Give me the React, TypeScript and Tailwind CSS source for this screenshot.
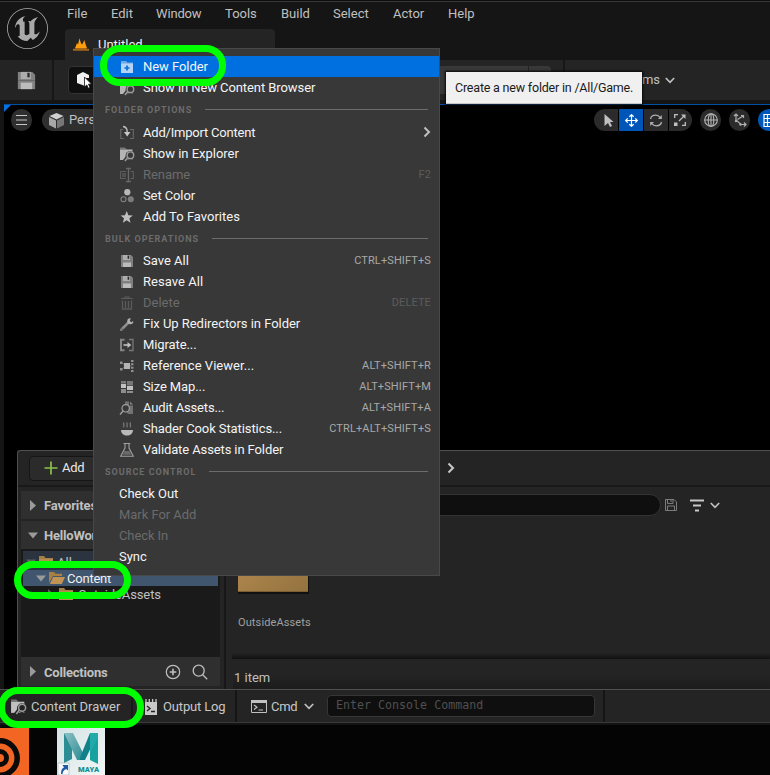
import React from "react";
import { SiUnrealengine } from "react-icons/si";

const font = "font-['Roboto','Noto_Sans',sans-serif]";

type IconProps = { className?: string; children: React.ReactNode; size?: number };
const Svg = ({ className = "", children, size = 16 }: IconProps) => (
  <svg width={size} height={size} viewBox="0 0 16 16" fill="none" className={"shrink-0 " + className}>
    {children}
  </svg>
);

const Floppy = ({ size = 16, className = "" }: { size?: number; className?: string }) => (
  <Svg size={size} className={className}>
    <path d="M2 2h10l2 2v4H2z" fill="#808080" />
    <path d="M2 8h12v6H2z" fill="#808080" />
    <path d="M4 2h7v5H4z" fill="#adadad" />
    <path d="M8.6 2.6h1.6v3.2H8.6z" fill="#2a2a2a" />
    <path d="M4 9.5h8V14H4z" fill="#bcbcbc" />
  </Svg>
);

const FolderSearch = ({ size = 16, color = "#b4b4b4", bg = "#383838" }: { size?: number; color?: string; bg?: string }) => (
  <Svg size={size}>
    <path d="M1 1.5h5l2 2H1z" fill={color} opacity=".5" />
    <path d="M1 3.500h12.500V14H1z" fill={color} />
    <circle cx="11.2" cy="9.5" r="4.600" fill={bg} />
    <path d="M9.4 9.8 5 15.6" stroke={bg} strokeWidth="3.400" />
    <circle cx="11.400" cy="9.2" r="3.3" stroke="#9c9c9c" strokeWidth="1.4" />
    <path d="M8.8 11.4 6 15" stroke="#9c9c9c" strokeWidth="1.5" />
  </Svg>
);

const icons: Record<string, React.ReactNode> = {
  newFolder: (
    <Svg>
      <path d="M2 2h5l1.5 1.5H14V5H2z" fill="#6fa9e8" />
      <path d="M2 4.5h12V14H2z" fill="#b4d3f5" />
      <path d="M8 6.5v5M5.5 9h5" stroke="#0670de" strokeWidth="1.7" />
    </Svg>
  ),
  folderSearch: <FolderSearch />,
  import: (
    <Svg>
      <path d="M4 4.500H1.700V13.500H5M11 13.500h3.300V4.500H11" stroke="#686868" strokeWidth="1.1" />
      <path d="M4 1.500C7 1.800 8.200 3.500 8.200 7" stroke="#c0c0c0" strokeWidth="1.4" />
      <path d="M5 7h6.400L8.200 11.400z" fill="#c8c8c8" />
    </Svg>
  ),
  rename: (
    <Svg>
      <path d="M1.500 4.500H7M1.500 4.500v7H7M11.500 4.500h2.800v7h-2.800" stroke="#5d5d5d" strokeWidth="1.1" />
      <path d="M3 6h4v4H3z" fill="#505050" />
      <path d="M7 1.500h5M9.500 1.500v13M7 14.500h5" stroke="#686868" strokeWidth="1.3" />
    </Svg>
  ),
  color: (
    <Svg>
      <circle cx="8.300" cy="4.200" r="3.100" fill="#b8b8b8" />
      <circle cx="4.500" cy="11.200" r="2.500" stroke="#858585" strokeWidth="1.100" />
      <circle cx="11.800" cy="11.200" r="3" fill="#7c7c7c" />
    </Svg>
  ),
  star: (
    <Svg>
      <path d="m7.700 2 1.700 4.200 4.400.3-3.400 2.800 1.100 4.400-3.800-2.400-3.800 2.400L5 9.300 1.600 6.500 6 6.200z" fill="#c0c0c0" />
    </Svg>
  ),
  save: <Floppy />,
  trash: (
    <Svg>
      <path d="M2 3.500h12M6 3.500V2h4v1.500" stroke="#5a5a5a" strokeWidth="1.200" />
      <path d="M3.500 5.500v8.500h9V5.500M6.500 6v7M9.500 6v7" stroke="#5a5a5a" strokeWidth="1.300" />
    </Svg>
  ),
  wrench: (
    <Svg>
      <path d="M2.400 13.700 9 7" stroke="#8f8f8f" strokeWidth="2.600" strokeLinecap="round" />
      <path d="M11.800 2.300a3 3 0 1 0 2.400 2.600l-2 1.300-1.400-1.500z" fill="#b0b0b0" />
      <circle cx="3" cy="13.100" r=".7" fill="#383838" />
    </Svg>
  ),
  migrate: (
    <Svg>
      <path d="M5.500 2.700H2v10.600h3.500" stroke="#858585" strokeWidth="2" />
      <path d="M10 2.500h4v11h-4" stroke="#777" strokeWidth="1.300" />
      <path d="M4.500 8h5" stroke="#c0c0c0" strokeWidth="1.600" />
      <path d="m8.500 5 3.800 3-3.800 3z" fill="#c0c0c0" />
    </Svg>
  ),
  reference: (
    <Svg>
      <path d="M5 5h6v6H5z" fill="#b4b4b4" />
      <path d="M1 3.500h2.500V6H1zM1 10h2.500v2.500H1zM12 2h2.500v2H12zM12 5.300h2.500v2H12zM12 8.700h2.500v2H12zM12 12h2.500v2H12z" fill="#8e8e8e" />
      <path d="M3 5l2 1.500M3 11l2-1.500M11 8h1.500" stroke="#777" />
    </Svg>
  ),
  size: (
    <Svg>
      <path d="M2 2h5v2H2zM8 2h6v4H8z" fill="#777" />
      <path d="M2 4.800h5V9H2zM8 6.800h6V11H8z" fill="#c0c0c0" />
      <path d="M2 10h5v4H2zM8 12h6v2H8z" fill="#8d8d8d" />
    </Svg>
  ),
  audit: (
    <Svg>
      <path d="M6 1.500h4v4h4V14H9l-3-4z" fill="#727272" />
      <path d="M11 1.500 14 4.500h-3z" fill="#858585" />
      <circle cx="6.700" cy="8.300" r="3.700" fill="#383838" stroke="#a0a0a0" strokeWidth="1.200" />
      <path d="m4 11-3 3.600" stroke="#a0a0a0" strokeWidth="1.400" />
    </Svg>
  ),
  cook: (
    <Svg>
      <path d="M5 1.500c-1.500 1.500 1 3-.5 5M8.300 1.500c-1.500 1.500 1 3-.5 5M11.600 1.500c-1.500 1.500 1 3-.5 5" stroke="#7c7c7c" strokeWidth="1.200" />
      <path d="M2 9h12c0 3.500-2.700 5.500-6 5.500s-6-2-6-5.500z" fill="#b8b8b8" />
    </Svg>
  ),
  flask: (
    <Svg>
      <path d="M4.500 1.500h6.800M6 1.500V6L1.700 14.300h12.600L10 6V1.500" stroke="#a0a0a0" strokeWidth="1.100" />
      <path d="M5.500 9h5l1.700 3.800H3.800z" fill="#6a6a6a" />
    </Svg>
  ),
};

type Row = { icon?: string; label: string; keys?: string; off?: boolean; arrow?: boolean; active?: boolean; ls?: string };

const MenuRow = ({ icon, label, keys, off, arrow, active, ls = "tracking-[0px]" }: Row) => (
  <div className={"flex h-[21px] items-center pl-[25px] pr-2 text-[13px] " + (active ? "bg-[#0070e0] " : "") + (off ? "text-[#6b6b6b]" : "text-[#f4f4f4]")}>
    {icon && <span className="mr-2 flex h-4 w-4">{icons[icon]}</span>}
    <span className={"whitespace-pre " + ls}>{label}</span>
    {keys && <span className={"ml-auto pt-[2px] text-[11px] tracking-[0.12px] " + (off ? "text-[#5c5c5c]" : "text-[#a8a8a8]")}>{keys}</span>}
    {arrow && (
      <svg width="9" height="12" viewBox="0 0 9 12" fill="none" className="-mt-px ml-auto">
        <path d="m2.500 1.500 4.500 4.500-4.500 4.500" stroke="#c0c0c0" strokeWidth="2" />
      </svg>
    )}
  </div>
);

const MenuHead = ({ text, h }: { text: string; h: string }) => (
  <div className={"flex items-center px-[11px] " + h}>
    <span className="pt-[2px] text-[9px] font-bold tracking-[1px] text-[#6c6c6c]">{text}</span>
    <span className="ml-[13px] h-px flex-1 bg-[#6c6c6c]" />
  </div>
);

const ContextMenu = () => (
  <div className="absolute left-[93px] top-[48px] h-[528px] w-[347px] border border-[#484848] bg-[#383838] pt-[7px]">
    <MenuRow icon="newFolder" label="New Folder" active ls="tracking-[-0.05px]" />
    <MenuRow icon="folderSearch" label="Show in New Content Browser" ls="tracking-[-0.08px]" />
    <MenuHead text="FOLDER OPTIONS" h="h-[23px] mb-px" />
    <MenuRow icon="import" label="Add/Import Content" arrow ls="tracking-[-0.21px]" />
    <MenuRow icon="folderSearch" label="Show in Explorer" ls="tracking-[-0.02px]" />
    <MenuRow icon="rename" label="Rename" keys="F2" off ls="tracking-[-0.05px]" />
    <MenuRow icon="color" label="Set Color" ls="tracking-[-0.1px]" />
    <MenuRow icon="star" label="Add To Favorites" />
    <MenuHead text="BULK OPERATIONS" h="h-[23px]" />
    <MenuRow icon="save" label="Save All" keys="CTRL+SHIFT+S" />
    <MenuRow icon="save" label="Resave All" ls="tracking-[0.04px]" />
    <MenuRow icon="trash" label="Delete" keys="DELETE" off />
    <MenuRow icon="wrench" label="Fix Up Redirectors in Folder" ls="tracking-[-0.03px]" />
    <MenuRow icon="migrate" label="Migrate..." ls="tracking-[-0.1px]" />
    <MenuRow icon="reference" label="Reference Viewer..." keys="ALT+SHIFT+R" ls="tracking-[0.04px]" />
    <MenuRow icon="size" label="Size Map..." keys="ALT+SHIFT+M" ls="tracking-[-0.1px]" />
    <MenuRow icon="audit" label="Audit Assets..." keys="ALT+SHIFT+A" ls="tracking-[-0.15px]" />
    <MenuRow icon="cook" label="Shader Cook Statistics..." keys="CTRL+ALT+SHIFT+S" ls="tracking-[-0.09px]" />
    <MenuRow icon="flask" label="Validate Assets in Folder" ls="tracking-[-0.11px]" />
    <MenuHead text="SOURCE CONTROL" h="h-[23px]" />
    <MenuRow label="Check Out" ls="tracking-[-0.02px]" />
    <MenuRow label="Mark For Add" off ls="tracking-[-0.05px]" />
    <MenuRow label="Check In" off ls="tracking-[-0.1px]" />
    <MenuRow label="Sync" />
  </div>
);

const Chevron = ({ className = "" }: { className?: string }) => (
  <svg width="10" height="7" viewBox="0 0 10 7" fill="none" className={className}>
    <path d="m.8 1 4.200 4.300L9.200 1" stroke="#c0c0c0" strokeWidth="1.700" />
  </svg>
);

const TitleBar = () => (
  <div className="flex h-[60px] border-t border-[#0c0c0c] bg-[#151515]">
    <div className="flex w-[65px] items-center justify-center border-t border-[#383838] pb-[5px] pr-[11px] text-[#a9a9a9]">
      <SiUnrealengine size={41} />
    </div>
    <div className="flex flex-1 flex-col justify-between border-t border-[#383838]">
      <div className="flex h-6 items-center pl-[2px] text-[13px] text-[#c0c0c0]">
        <span className="w-[44px]">File</span>
        <span className="w-[45px]">Edit</span>
        <span className="w-[69px] tracking-[-0.15px]">Window</span>
        <span className="w-[56px]">Tools</span>
        <span className="w-[52px]">Build</span>
        <span className="w-[60px]">Select</span>
        <span className="w-[55px]">Actor</span>
        <span>Help</span>
      </div>
      <div className="flex h-[31px] w-[210px] items-center rounded-t-[4px] bg-[#242424] pl-[8px] text-[13px] text-[#f0f0f0]">
        <svg width="16" height="13" viewBox="0 0 16 13" className="mr-[9px]">
          <path d="M2 10.200 4 5l1 1.500L6.500.3l1.300 4.500L9 6.500 10 5l1.300-3L12.500 6 14 10.200z" fill="#ff9d0a" />
          <path d="M0 10.700h2l.5-.7h11l.5.7h2v2H0z" fill="#a5661a" />
        </svg>
        <span>Untitled</span>
      </div>
    </div>
  </div>
);

const Toolbar = () => (
  <div className="flex h-[44px] border-b-4 border-[#151515] bg-[#242424]">
    <div className="flex w-[54px] items-center justify-center border-r-2 border-[#171717]">
      <Floppy size={23} />
    </div>
    <div className="ml-[14px] mt-[6px] flex h-7 w-[60px] items-center rounded-[4px] border border-[#333] bg-[#0f0f0f] pl-[7px]">
      <svg width="20" height="20" viewBox="0 0 20 20">
        <path d="m1 5 6-3 6 3v3L9 8v8l-8-3z" fill="#f0f0f0" />
        <path d="m8.500 7 7 7-3 .2 1.500 3.300-1.700.8-1.500-3.300-2.300 2z" fill="#fff" stroke="#111" strokeWidth=".8" />
      </svg>
    </div>
    <div className="ml-[272px] mt-[6px] flex h-7 gap-px">
      <div className="w-[128px] bg-[#383838]" />
      <div className="w-[22px] rounded-r-[4px] bg-[#383838]" />
    </div>
    <div className="ml-[12px] h-full w-[2px] bg-[#171717]" />
    <div className="flex w-[110px] items-center justify-end text-[13px] text-[#c0c0c0]">
      <span className="mr-[5px]">ms</span>
      <Chevron />
    </div>
  </div>
);

const cell = "flex h-[22px] items-center justify-center bg-[#2b2b2b]";

const Viewport = () => (
  <div className="flex h-[346px] bg-[#151515] pl-1">
    <div className="flex flex-1 items-start border-t border-[#0050a8] bg-black pt-1">
      <svg width="7" height="7" viewBox="0 0 7 7" className="-mt-1">
        <path d="M0 0h7L0 7z" fill="#0670de" />
      </svg>
      <div className="flex h-[22px] w-[21px] items-center justify-center rounded-full bg-[#2f2f2f]">
        <svg width="11" height="10" viewBox="0 0 11 10">
          <path d="M0 .5h11M0 5h11M0 9.500h11" stroke="#c8c8c8" />
        </svg>
      </div>
      <div className="ml-[10px] flex h-[22px] w-[110px] items-center rounded-full bg-[#2f2f2f] pl-[6px] text-[13px] text-[#c0c0c0]">
        <svg width="17" height="17" viewBox="0 0 17 17" className="mr-[4px]">
          <path d="m8.500 1 7 3-7 3.500-7-3.500z" fill="#d0d0d0" />
          <path d="M1 5l7 3.500v8L1 13z" fill="#a8a8a8" />
          <path d="m16 5-7 3.500v8l7-3.500z" fill="#777" />
        </svg>
        Perspective
      </div>
      <div className="ml-[442px] flex gap-px">
        <div className={cell + " w-[24px] rounded-l-full"}>
          <svg width="12" height="15" viewBox="0 0 12 15" className="ml-[5px]">
            <path d="m1.500 1 9 8H7l2 4-2 1-2-4-3.500 3z" fill="#c0c0c0" />
          </svg>
        </div>
        <div className="flex h-[22px] w-[24px] items-center justify-center bg-[#0056b8]">
          <svg width="13" height="13" viewBox="0 0 13 13" fill="none" stroke="#fff" strokeWidth="1.200">
            <path d="M6.500 1v11M1 6.500h11M4.300 2.800 6.500.7l2.200 2.100M4.300 10.200l2.200 2.100 2.200-2.100M2.800 4.300.7 6.500l2.100 2.200M10.200 4.300l2.100 2.200-2.100 2.200" />
          </svg>
        </div>
        <div className={cell + " w-[24px]"}>
          <svg width="14" height="13" viewBox="0 0 14 13" fill="none" stroke="#b0b0b0" strokeWidth="1.300">
            <path d="M1.500 5C2 2.600 4.300 1.200 6.700 1.200c2 0 3.500.8 4.500 2.300M12.500 8c-.5 2.400-2.800 3.800-5.200 3.800-2 0-3.500-.8-4.500-2.300" />
            <path d="M12.800 1v4H9zM1.200 12V8H5z" fill="#b0b0b0" stroke="none" />
          </svg>
        </div>
        <div className={cell + " w-[23px] rounded-r-full pr-[2px]"}>
          <svg width="12" height="12" viewBox="0 0 12 12" fill="none" stroke="#c0c0c0">
            <path d="M5 7 10 2" strokeWidth="1.300" />
            <path d="M7 .5h4.500V5z" fill="#c0c0c0" stroke="none" />
            <path d="M.7 4V.7H4M11.300 8v3.300H8" strokeWidth="1.300" />
            <path d="M0 8.500h3.500V12H0z" fill="#c0c0c0" stroke="none" />
          </svg>
        </div>
      </div>
      <div className={cell + " ml-[8px] w-[21px] rounded-full"}>
        <svg width="14" height="14" viewBox="0 0 14 14" fill="none" stroke="#b8b8b8" strokeWidth="1.100">
          <circle cx="7" cy="7" r="6.300" />
          <ellipse cx="7" cy="7" rx="2.800" ry="6.300" />
          <path d="M.7 7h12.600M7 .7v12.600" />
        </svg>
      </div>
      <div className={cell + " ml-[8px] w-[21px] rounded-full"}>
        <svg width="14" height="14" viewBox="0 0 14 14" fill="none" stroke="#b0b0b0" strokeWidth="1.200">
          <path d="M3 1.500v5.500L8 11.500h4.500M1 3l2-2 2 2M11 9.500l2 2-2 2" />
          <path d="M4.500 6.500 10 3M8 2.500h2.500V5" />
          <circle cx="3" cy="8" r="1.200" fill="#b0b0b0" stroke="none" />
          <circle cx="7.500" cy="11.500" r="1.200" fill="#b0b0b0" stroke="none" />
        </svg>
      </div>
      <div className="ml-[8px] flex h-[22px] w-[22px] shrink-0 items-center justify-center rounded-full bg-[#0056b8]">
        <svg width="13" height="13" viewBox="0 0 13 13" fill="none" stroke="#fff" className="shrink-0">
          <path d="M1 .5h11v12H1zM1 4.500h11M1 8.500h11M4.500.5v12M8.500.5v12" strokeWidth="1.200" />
        </svg>
      </div>
    </div>
  </div>
);

const Tri = ({ open, dim }: { open?: boolean; dim?: boolean }) => (
  <svg width="11" height="11" viewBox="0 0 11 11" className="shrink-0">
    <path d={open ? "M0 2.500h10L5 8.500z" : "M2 0v11l6-5.500z"} fill={dim ? "#5f5f5f" : "#9a9a9a"} />
  </svg>
);

const FolderGlyph = ({ open }: { open?: boolean }) => (
  <svg width="16" height="14" viewBox="0 0 16 14" className="shrink-0">
    {open ? (
      <>
        <path d="M0 1h5l1.500 1.800H13V5H4L0 12z" fill="#a8813f" />
        <path d="M4.200 6H16l-3.200 7H.8z" fill="#c09454" />
      </>
    ) : (
      <>
        <path d="M0 1h5l1.500 2H14v2H0z" fill="#a57f47" />
        <path d="M0 4h14v9H0z" fill="#b78c4f" />
      </>
    )}
  </svg>
);

const Drawer = () => (
  <div className="flex h-[239px] bg-[#151515] pl-1">
    <div className="w-[13px] bg-black" />
    <div className="flex flex-1 flex-col rounded-tl-[4px] border-l border-t border-[#505050] bg-[#242424]">
      <div className="flex h-[36px] items-center border-b-2 border-[#191919] pl-[11px]">
        <div className="flex h-[25px] w-[90px] items-center rounded-[4px] border border-[#161616] bg-[#2b2b2b] pl-[14px] text-[13px] tracking-[-0.3px] text-[#e8e8e8]">
          <svg width="14" height="14" viewBox="0 0 14 14" className="mr-[4px]">
            <path d="M7 .5v13M.5 7h13" stroke="#8bc24a" strokeWidth="1.700" />
          </svg>
          Add
        </div>
        <svg width="9" height="12" viewBox="0 0 9 12" fill="none" className="ml-[327px]">
          <path d="m2.500 1.500 4.500 4.500-4.500 4.500" stroke="#c8c8c8" strokeWidth="2" />
        </svg>
      </div>
      <div className="flex flex-1">
        <div className="flex w-[205px] flex-col px-[3px] pb-[3px] pt-[4px] text-[13px]">
          <div className="flex h-[28px] items-center bg-[#2f2f2f] pl-[7px] font-bold text-[#c0c0c0]">
            <Tri /><span className="ml-[5px] pt-px tracking-[-0.1px]">Favorites</span>
          </div>
          <div className="mt-[2px] flex h-[28px] items-center bg-[#2f2f2f] pl-[7px] font-bold text-[#c0c0c0]">
            <Tri open /><span className="ml-[5px] pt-[2px] tracking-[-0.2px]">HelloWorld</span>
          </div>
          <div className="flex-1 bg-[#1a1a1a] px-[2px] pt-[2px] text-[#c0c0c0]">
            <div className="flex h-[19px] items-end bg-[#2a333e] pl-[3px]">
              <div className="flex h-4 items-center"><Tri open dim /><span className="ml-[2px] mr-[2px] flex"><FolderGlyph /></span><span className="pt-[2px]">All</span></div>
            </div>
            <div className="flex h-4 items-center bg-[#40566f] pl-[13px] text-[#f0f0f0]">
              <Tri open /><span className="ml-[2px] mr-[2px] flex"><FolderGlyph open /></span><span className="pt-[2px] tracking-[-0.22px]">Content</span>
            </div>
            <div className="flex h-4 items-center pl-[23px]">
              <Tri dim /><span className="ml-[2px] mr-[3px] flex"><FolderGlyph /></span><span className="pt-[2px] tracking-[-0.1px]">OutsideAssets</span>
            </div>
          </div>
          <div className="flex h-[29px] items-center bg-[#2f2f2f] pl-[7px] font-bold text-[#c0c0c0]">
            <Tri /><span className="ml-[5px] pt-[2px] tracking-[-0.2px]">Collections</span>
            <svg width="16" height="16" viewBox="0 0 16 16" fill="none" stroke="#c0c0c0" strokeWidth="1.200" className="ml-auto mr-[11px]">
              <circle cx="8" cy="8" r="6.700" /><path d="M8 4.700v6.600M4.700 8h6.600" strokeWidth="1.600" />
            </svg>
            <svg width="16" height="16" viewBox="0 0 16 16" fill="none" stroke="#c0c0c0" strokeWidth="1.300" className="mr-[12px]">
              <circle cx="6.700" cy="6.700" r="5.500" /><path d="m10.700 10.700 4.500 4.500" />
            </svg>
          </div>
        </div>
        <div className="ml-px flex flex-1 flex-col border-l-2 border-[#171717] pl-[7px]">
          <div className="mt-[7px] flex h-[22px] items-center">
            <div className="h-[22px] w-[428px] rounded-full border border-[#333] bg-[#0f0f0f]" />
            <svg width="12" height="12" viewBox="0 0 12 12" fill="none" stroke="#7c7c7c" className="ml-[4px]">
              <path d="M.5.5H9L11.500 3v8.500H.5zM2.500.5v4H8v-4M2.500 11.500V7h7v4.500M6 1v2" />
            </svg>
            <svg width="14" height="13" viewBox="0 0 14 13" className="ml-[13px] mr-[6px]">
              <path d="M0 1.500h14M3 6.500h8M5 11.500h4" stroke="#c8c8c8" strokeWidth="2" />
            </svg>
            <Chevron />
          </div>
          <div className="ml-[5px] mt-[22px] h-[56px] w-[71px] border-b-2 border-r border-[#111] bg-[#7d5f33] pb-px">
            <div className="h-full bg-gradient-to-br from-[#b88e52] to-[#94733f]" />
          </div>
          <span className="ml-[4px] mt-[21px] pl-px text-[11px] tracking-[0.12px] text-[#a0a0a0]">OutsideAssets</span>
          <div className="-ml-px mt-auto h-[6px] bg-gradient-to-b from-[#242424] to-[#111]" />
          <div className="flex h-[30px] items-center bg-gradient-to-b from-[#242424] via-[#242424] to-[#1c1c1c] pl-px pt-[7px] text-[13px] text-[#c0c0c0]">1 item</div>
        </div>
      </div>
    </div>
  </div>
);

const StatusBar = () => (
  <div className="flex h-[36px] border-b-2 border-[#131313] text-[13px] text-[#c8c8c8]">
    <div className="flex flex-1 items-center border-b border-t border-b-[#3a3a3a] border-t-[#505050] bg-[#242424] pl-[10px]">
      <FolderSearch size={17} bg="#242424" color="#c0c0c0" />
      <span className="ml-[4px] w-[100px] pt-[2px] tracking-[-0.03px]">Content Drawer</span>
      <span className="mr-[11px] h-full w-[2px] bg-[#191919]" />
      <svg width="14" height="17" viewBox="0 0 14 17" className="mr-[5px]">
        <path d="M1 4h12v13H1z" fill="#c8c8c8" />
        <path d="M2 1v3M5.300 1v3M8.600 1v3M12 1v3" stroke="#c8c8c8" strokeWidth="1.300" />
        <path d="m3 8 3 2.500L3 13M7 13.500h4" stroke="#242424" strokeWidth="1.400" fill="none" />
      </svg>
      <span className="w-[72px] pt-[2px] tracking-[-0.15px]">Output Log</span>
      <span className="mr-[14px] h-full w-[2px] bg-[#151515]" />
      <svg width="16" height="13" viewBox="0 0 16 13" fill="none" className="mr-[4px]">
        <path d="M.5.5h15v12H.5z" stroke="#c0c0c0" /><path d="M0 0h16v3H0z" fill="#c0c0c0" />
        <path d="m3 5 3 2.200L3 9.500M7.500 10H12" stroke="#c0c0c0" strokeWidth="1.200" />
      </svg>
      <span className="w-[33px] pt-[2px] tracking-[-0.3px]">Cmd</span>
      <Chevron />
      <div className="ml-[13px] flex h-[22px] w-[268px] items-center rounded-[4px] border border-[#363636] bg-[#0f0f0f] pl-[8px] font-['DejaVu_Sans_Mono',monospace] text-[11.6px] tracking-[0.03px] text-[#505050]">
        Enter Console Command
      </div>
      <span className="ml-[8px] h-full w-[2px] bg-[#151515]" />
    </div>
  </div>
);

const Desktop = () => (
  <div className="flex h-[50px] items-start bg-[#040404] pt-[3px]">
    <svg width="29" height="47" viewBox="0 0 29 47">
      <path d="M0 0h29v47H0z" fill="#f26522" />
      <circle cx="0" cy="30" r="17.200" fill="none" stroke="#0a0a0a" strokeWidth="5.500" />
      <circle cx="0" cy="30" r="6.500" fill="none" stroke="#0a0a0a" strokeWidth="5" />
    </svg>
    <svg width="48" height="47" viewBox="0 0 48 47" className="ml-[28px]">
      <defs>
        <linearGradient id="paper" x1="0" y1="0" x2="1" y2="1"><stop stopColor="#d5e3e4" /><stop offset="1" stopColor="#f2f7f7" /></linearGradient>
        <linearGradient id="fold" x1="0" y1="0" x2="1" y2="1"><stop stopColor="#8fbfc4" /><stop offset="1" stopColor="#2a8e95" /></linearGradient>
      </defs>
      <path d="M0 0h48v48H0z" fill="url(#paper)" />
      <path d="M7 5v30l8-4V14z" fill="#2c8d94" />
      <path d="M33 14v18l8 4V5z" fill="#17a19f" />
      <path d="M7 5h9l10 20-4 7h-2z" fill="url(#fold)" />
      <path d="M33 5h8l-13 27h-6z" fill="#12808a" />
      <path d="M33 5h8v5L33 25z" fill="#22aaa8" />
      <text x="21" y="44" fontSize="7.5" fontWeight="900" fill="#0c8f93" textLength="21" fontFamily="Roboto, sans-serif">MAYA</text>
      <path d="M1 35h11v12H1z" fill="#f8f8f8" stroke="#8aa" strokeWidth=".5" />
      <path d="M4 46c0-4 1-6 3-6.500L5.500 37H11v5.500L9.300 41C7 42 6 43 5.500 46z" fill="#1f5aa8" />
    </svg>
  </div>
);

const Rings = () => (
  <>
    <div className="absolute left-[100px] top-[45px] h-[41px] w-[126px] rounded-[20px] border-[7px] border-[#00ff00]" />
    <div className="absolute left-[14px] top-[561px] h-[38px] w-[117px] rounded-[19px] border-[7px] border-[#00ff00]" />
    <div className="absolute left-[-2px] top-[687px] h-[41px] w-[146px] rounded-[20px] border-[7px] border-[#00ff00]" />
  </>
);

export default function App() {
  return (
    <div className={"relative flex h-[775px] w-[770px] flex-col overflow-hidden bg-black " + font}>
      <TitleBar />
      <Toolbar />
      <Viewport />
      <Drawer />
      <StatusBar />
      <Desktop />
      <ContextMenu />
      <div className="absolute left-[446px] top-[72px] flex h-[32px] w-[196px] items-center whitespace-nowrap border-b border-[#c8c8c8] bg-[#f0f0f0] pl-[9px] pt-px text-[12.5px] tracking-[-0.2px] text-[#1a1a1a] shadow-[0_0_2px_1px_#080808]">
        Create a new folder in /All/Game.
      </div>
      <Rings />
    </div>
  );
}
